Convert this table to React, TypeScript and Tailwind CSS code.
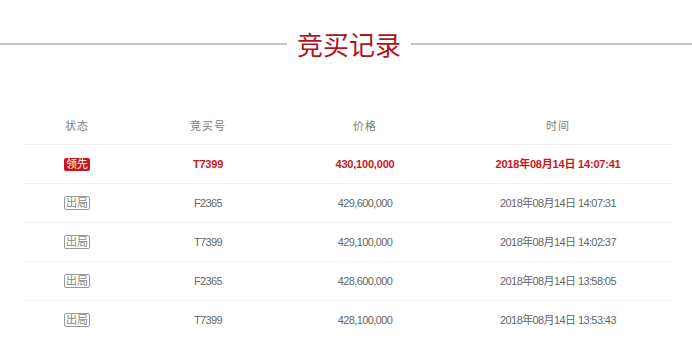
import React from 'react';

type Bid = {
  leading: boolean;
  code: string;
  price: string;
  time: string;
};

const bids: Bid[] = [
  { leading: true, code: 'T7399', price: '430,100,000', time: '2018年08月14日 14:07:41' },
  { leading: false, code: 'F2365', price: '429,600,000', time: '2018年08月14日 14:07:31' },
  { leading: false, code: 'T7399', price: '429,100,000', time: '2018年08月14日 14:02:37' },
  { leading: false, code: 'F2365', price: '428,600,000', time: '2018年08月14日 13:58:05' },
  { leading: false, code: 'T7399', price: '428,100,000', time: '2018年08月14日 13:53:43' },
];

const cols = ['w-[106px]', 'w-[156px]', 'w-[158px]', 'w-[228px]'];

const StatusTag = ({ leading }: { leading: boolean }) =>
  leading ? (
    <span className="inline-block rounded-[2px] bg-[#c8161e] px-[2px] text-[11px] font-normal leading-[13px] text-white">
      领先
    </span>
  ) : (
    <span className="inline-block rounded-[2px] border border-[#9a9a9a] px-[1px] text-[11px] leading-[12px] text-[#888]">
      出局
    </span>
  );

const App: React.FC = () => {
  return (
    <div className="h-[339px] w-[692px] overflow-hidden bg-white font-['Liberation_Sans','Noto_Sans_CJK_SC',sans-serif]">
      {/* title with rules either side */}
      <div className="flex items-center pt-[29px]">
        <div className="h-[2px] w-[287px] bg-[#c4c4c4]" />
        <h2 className="px-[10px] text-[26px] leading-[30px] text-[#b3121c] font-['Noto_Sans_CJK_SC',sans-serif]">
          竞买记录
        </h2>
        <div className="h-[2px] flex-1 bg-[#c4c4c4]" />
      </div>

      <div className="ml-[24px] mt-[47px] w-[648px]">
        <div className="flex h-[39px] items-center border-b border-[#efefef] text-[11px] text-[#808080] font-['Noto_Sans_CJK_SC',serif]">
          {['状态', '竞买号', '价格', '时间'].map((h, i) => (
            <div key={h} className={`${cols[i]} shrink-0 text-center tracking-[1px]`}>
              {h}
            </div>
          ))}
        </div>

        {bids.map((b, idx) => (
          <div
            key={idx}
            className={`flex h-[39px] items-center border-b border-[#efefef] text-[11px] ${
              b.leading ? 'font-bold text-[#c8161e]' : 'text-[#666]'
            }`}
          >
            <div className={`${cols[0]} flex shrink-0 justify-center`}>
              <StatusTag leading={b.leading} />
            </div>
            <div className={`${cols[1]} shrink-0 text-center ${b.leading ? 'tracking-[-0.2px]' : 'tracking-[-0.6px]'}`}>
              {b.code}
            </div>
            <div className={`${cols[2]} shrink-0 text-center ${b.leading ? 'tracking-[-0.2px]' : 'tracking-[-0.6px]'}`}>
              {b.price}
            </div>
            <div className={`${cols[3]} shrink-0 text-center ${b.leading ? 'tracking-[-0.2px]' : 'tracking-[-0.6px]'}`}>
              {b.time}
            </div>
          </div>
        ))}
      </div>
    </div>
  );
};

export default App;
